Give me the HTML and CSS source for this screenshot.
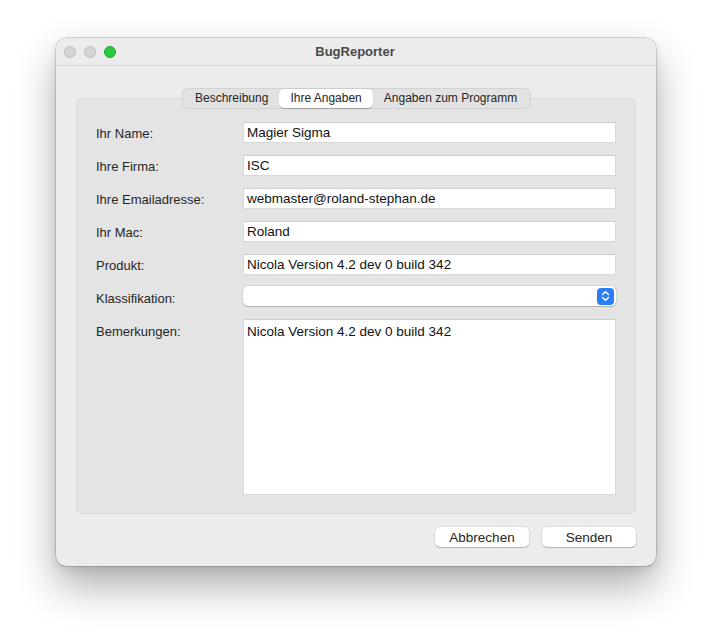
FILE: index.html
```html
<!DOCTYPE html>
<html>
<head>
<meta charset="utf-8">
<link rel="stylesheet" href="styles.css">
</head>
<body>
<div class="window">
  <div class="titlebar">
    <div class="lights">
      <span class="light off"></span>
      <span class="light off"></span>
      <span class="light green"></span>
    </div>
    <div class="title">BugReporter</div>
  </div>
  <div class="content">
    <div class="tabbox">
      <div class="tabs">
        <span class="tab">Beschreibung</span>
        <span class="tab active">Ihre Angaben</span>
        <span class="tab">Angaben zum Programm</span>
      </div>
      <div class="form">
        <label class="lbl">Ihr Name:</label>
        <div class="field">Magier Sigma</div>
        <label class="lbl">Ihre Firma:</label>
        <div class="field">ISC</div>
        <label class="lbl">Ihre Emailadresse:</label>
        <div class="field">webmaster@roland-stephan.de</div>
        <label class="lbl">Ihr Mac:</label>
        <div class="field">Roland</div>
        <label class="lbl">Produkt:</label>
        <div class="field">Nicola Version 4.2 dev 0 build 342</div>
        <label class="lbl">Klassifikation:</label>
        <div class="popup">
          <span class="popup-btn">
            <svg width="9" height="12" viewBox="0 0 9 12"><path d="M1.5 4.5 L4.5 1.8 L7.5 4.5 M1.5 7.5 L4.5 10.2 L7.5 7.5" fill="none" stroke="#fff" stroke-width="1.5" stroke-linecap="round" stroke-linejoin="round"/></svg>
          </span>
        </div>
        <label class="lbl lbl-top">Bemerkungen:</label>
        <div class="textarea">Nicola Version 4.2 dev 0 build 342</div>
      </div>
    </div>
    <div class="buttons">
      <button class="btn">Abbrechen</button>
      <button class="btn">Senden</button>
    </div>
  </div>
</div>
</body>
</html>
```
FILE: styles.css
```css
html, body {
  margin: 0;
  padding: 0;
  background: #ffffff;
}
html {
  min-height: 640px;
}
body {
  min-height: 640px;
  box-sizing: border-box;
  padding: 38px 0 0 56px;
  font-family: "Liberation Sans", Arial, sans-serif;
  font-size: 13px;
  color: #262626;
}
.window {
  width: 600px;
  height: 528px;
  box-sizing: border-box;
  background: #ececec;
  border-radius: 10px;
  box-shadow: 0 0 0 0.5px rgba(0,0,0,0.28), 0 20px 40px rgba(0,0,0,0.32), 0 4px 10px rgba(0,0,0,0.08);
  overflow: hidden;
}
.titlebar {
  height: 28px;
  box-sizing: border-box;
  border-bottom: 1px solid #d4d4d4;
  background: #ececec;
  position: relative;
  display: flex;
  align-items: center;
  justify-content: center;
}
.lights {
  position: absolute;
  left: 8px;
  top: 8px;
  display: flex;
  gap: 8px;
}
.light {
  width: 12px;
  height: 12px;
  box-sizing: border-box;
  border-radius: 50%;
}
.light.off {
  background: #d5d5d5;
  border: 0.5px solid #bdbdbd;
}
.light.green {
  background: #2ac940;
  border: 0.5px solid #1ea833;
}
.title {
  font-weight: bold;
  font-size: 13px;
  color: #4a4a4a;
  margin-left: -2px;
}
.content {
  padding: 32px 20px 0 20px;
}
.tabbox {
  position: relative;
  height: 416px;
  box-sizing: border-box;
  background: #e4e4e4;
  border: 1px solid #d8d8d8;
  border-radius: 6px;
  padding: 23px 20px 0 19px;
}
.tabs {
  position: absolute;
  top: -11px;
  left: 105px;
  height: 21px;
  box-sizing: border-box;
  display: flex;
  align-items: center;
  background: #e2e2e2;
  border: 1px solid #d2d2d2;
  border-radius: 6px;
  padding: 0 1px;
  font-size: 12px;
}
.tab {
  height: 19px;
  line-height: 19px;
  padding: 0 11px 0 11px;
  color: #262626;
  white-space: nowrap;
}
.tab.active {
  background: #ffffff;
  border-radius: 5px;
  box-shadow: 0 0.5px 1px rgba(0,0,0,0.25);
  padding: 0 11px;
}
.tab:last-child {
  padding: 0 12px 0 11px;
}
.form {
  display: grid;
  grid-template-columns: 147px 373px;
  row-gap: 12px;
  align-items: center;
}
.lbl {
  color: #262626;
  padding-top: 2px;
}
.lbl-top {
  align-self: start;
  padding-top: 5px;
}
.field {
  height: 21px;
  box-sizing: border-box;
  background: #ffffff;
  border: 1px solid #d9d9d9;
  border-top-color: #cfcfcf;
  padding: 0 3px;
  line-height: 19px;
  color: #111;
  font-size: 13.5px;
}
.popup {
  height: 20px;
  box-sizing: border-box;
  background: #ffffff;
  border-radius: 5px;
  box-shadow: 0 0 0 0.5px rgba(0,0,0,0.12), 0 1px 1px rgba(0,0,0,0.18);
  display: flex;
  justify-content: flex-end;
  align-items: center;
  padding-right: 2px;
  margin: -1px 0 1px 0;
}
.popup-btn {
  width: 17px;
  height: 17px;
  border-radius: 4px;
  background: #2a7ff6;
  display: flex;
  align-items: center;
  justify-content: center;
}
.textarea {
  height: 176px;
  box-sizing: border-box;
  background: #ffffff;
  border: 1px solid #d9d9d9;
  border-top-color: #cfcfcf;
  padding: 4px 3px;
  color: #111;
  font-size: 13.5px;
}
.buttons {
  display: flex;
  justify-content: flex-end;
  gap: 13px;
  padding-top: 13px;
}
.btn {
  width: 94px;
  height: 20px;
  box-sizing: border-box;
  border: none;
  background: #ffffff;
  border-radius: 5px;
  box-shadow: 0 0 0 0.5px rgba(0,0,0,0.12), 0 1px 1px rgba(0,0,0,0.2);
  font-family: "Liberation Sans", Arial, sans-serif;
  font-size: 13.5px;
  color: #262626;
  padding: 0;
}
```
